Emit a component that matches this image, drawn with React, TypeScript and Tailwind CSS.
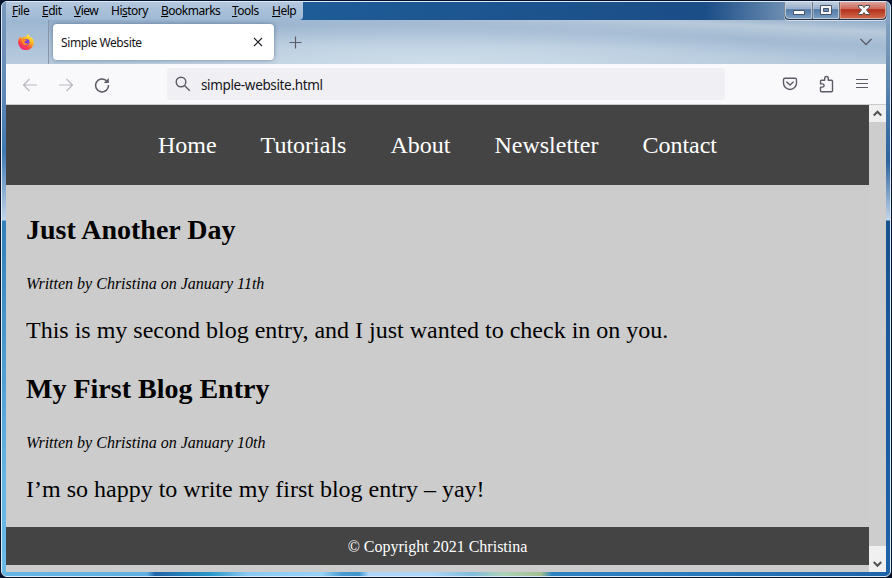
import React from "react";

const menus = ["File", "Edit", "View", "History", "Bookmarks", "Tools", "Help"];
const menuClass = [
  "w-[30px]",
  "w-8",
  "w-[37px]",
  "w-[50px]",
  "w-[71px]",
  "w-10",
  "w-[35px]",
];

function MenuBar() {
  return (
    <div className="flex h-[18px] w-[297px] shrink-0 rounded-br-[4px] bg-linear-to-b from-[#b3c7de] to-[#9fb9d5] pl-1.5 text-[12px] leading-[18px] text-black">
      {menus.map((name, i) => {
        const at = name === "History" ? 2 : 0;
        return (
          <span key={name} className={`${menuClass[i]} shrink-0 whitespace-nowrap tracking-[-0.5px]`}>
            {name.slice(0, at)}
            <span className="underline underline-offset-1">{name[at]}</span>
            {name.slice(at + 1)}
          </span>
        );
      })}
    </div>
  );
}

function WindowButtons() {
  return (
    <svg width="103" height="19" viewBox="0 0 103 19" className="shrink-0">
      <defs>
        <linearGradient id="blueBtn" x2="0" y2="1">
          <stop offset="0" stopColor="#c2d0e0" />
          <stop offset=".42" stopColor="#98b0cb" />
          <stop offset=".48" stopColor="#537ba8" />
          <stop offset="1" stopColor="#7c9fc4" />
        </linearGradient>
        <linearGradient id="redBtn" x2="0" y2="1">
          <stop offset="0" stopColor="#e0a79e" />
          <stop offset=".42" stopColor="#cb6a5b" />
          <stop offset=".48" stopColor="#b32f1c" />
          <stop offset="1" stopColor="#d06b4c" />
        </linearGradient>
      </defs>
      <path d="M0 0v14q0 5 5 5h93q5 0 5-5V0z" fill="#d3deea" />
      <path d="M.5 0v13.500q0 4.500 4.500 4.500h93q4.500 0 4.500-4.500V0z" fill="#253449" />
      <path d="M1.500-.5h26v17H5q-3.500 0-3.500-3.500z" fill="url(#blueBtn)" stroke="#d6e0ec" strokeWidth=".8" />
      <path d="M29-.5h25.500v17H29z" fill="url(#blueBtn)" stroke="#d6e0ec" strokeWidth=".8" />
      <path d="M56-.5h45.500V13q0 3.500-3.500 3.500H56z" fill="url(#redBtn)" stroke="#eac5bc" strokeWidth=".8" />
      <path d="M9.500 8.500h11v4h-11z" fill="#fff" stroke="#48546a" />
      <path d="M36.500 3.500h11v9h-11z" fill="#f6f6f6" stroke="#48546a" />
      <path d="M39.500 6.500h5v3h-5z" fill="#6e90b7" stroke="#48546a" />
      <path d="M74.500 3.500h4l1.500 2 1.500-2h4v1.500L82.500 8l3 3.500v1h-4L80 10.500l-1.500 2h-4v-1l3-3.500-3-3z" fill="#fff" stroke="#48485a" />
    </svg>
  );
}

function Firefox() {
  return (
    <svg width="16" height="16" viewBox="0 0 16 16" className="ml-3">
      <defs>
        <linearGradient id="fox" x1=".8" y1=".1" x2=".2" y2="1">
          <stop offset="0" stopColor="#fff04a" />
          <stop offset=".35" stopColor="#ffae20" />
          <stop offset=".65" stopColor="#ff483d" />
          <stop offset="1" stopColor="#ee178b" />
        </linearGradient>
      </defs>
      <path d="M10.500 0c.3 2 1.700 2.600 2.400 3.800l.2-.8c2 1.700 2.800 3.800 2.800 5.300a7.900 7.700 0 0 1-15.800.2C0 6 1 3.800 2.200 2.500l.3 1.700 1.700-.7C5.500 2.700 7 2.800 8.200 3c.2-1.300 1.200-2.400 2.300-3z" fill="url(#fox)" />
      <circle cx="8.300" cy="8.200" r="3.200" fill="#7542e5" />
      <path d="M3 5.500c1.500-1 3-.8 4 .1l2 .1c-.2 1-1.800 1.300-2.500 2 0 1.800 2.700 2.500 4.300 1-.5 2.800-5.800 3.600-6.600-.3z" fill="#ff8a22" />
      <path d="M9 4.200c3 .4 3.600 3 2.600 5.300 1.600-1 2-3 1.300-5z" fill="#ffc52f" />
    </svg>
  );
}

function TabBar() {
  return (
    <div className="flex h-11 shrink-0 items-center bg-[radial-gradient(ellipse_380px_42px_at_430px_44px,#cfdeea_0%,transparent_100%),linear-gradient(to_bottom_left,#8faac9_0%,#b8c9da_14%,#a3bad3_30%,transparent_50%),linear-gradient(#94aeca,#b2c7dc_65%,#b5c9db)]">
      <div className="flex h-full w-[43px] items-center border-r border-[#8796a8] bg-linear-to-b from-[#9db6d1] to-[#b9cbdf]">
        <Firefox />
      </div>
      <div className="ml-1 flex h-9 w-[221px] items-center justify-between rounded-[4px] bg-white pt-0.5 pr-[11px] pl-2 shadow-[0_0_4px_rgba(50,70,110,0.55)]">
        <span className="text-[12px] tracking-[-0.4px] text-[#15141a]">Simple Website</span>
        <svg width="10" height="10" viewBox="0 0 10 10" className="mb-0.5" stroke="#202027" strokeWidth="1.100"><path d="M1 1l8 8M9 1L1 9" /></svg>
      </div>
      <svg width="13" height="13" viewBox="0 0 13 13" className="ml-[15px]" stroke="#5b5b66" strokeWidth="1.200"><path d="M6.500.5v12M.5 6.500h12" /></svg>
      <svg width="14" height="8" viewBox="0 0 14 8" className="mr-[13px] ml-auto" fill="none" stroke="#5b5b66" strokeWidth="1.300"><path d="M1.500 1L7 6.500 12.500 1" /></svg>
    </div>
  );
}

function Toolbar() {
  return (
    <div className="flex h-[41px] shrink-0 items-center border-b border-[#cccccf] bg-[#f9f9fb] pr-4 pl-4">
      <svg width="90" height="18" viewBox="0 0 90 18" className="mt-px" fill="none" strokeWidth="1.200">
        <path d="M15 9H1.500M7.500 3l-6 6 6 6M37 9h13.500M44.500 3l6 6-6 6" stroke="#b7b7bd" />
        <path d="M84.500 4.700A6.500 6.500 0 1 0 86.500 9" stroke="#5b5b66" strokeWidth="1.500" />
        <path d="M86.800 2v5h-5z" fill="#5b5b66" />
      </svg>
      <div className="ml-[55px] flex h-8 w-[558px] items-center rounded-[4px] bg-[#f0f0f4]">
        <svg width="16" height="16" viewBox="0 0 16 16" className="ml-2 shrink-0" fill="none" stroke="#5b5b66" strokeWidth="1.400"><circle cx="6" cy="6" r="4.800" /><path d="M9.500 9.500l5.300 5.300" /></svg>
        <span className="mt-0.5 ml-2.5 text-[13.500px] tracking-[-0.35px] text-[#15141a]">simple-website.html</span>
      </div>
      <svg width="88" height="18" viewBox="0 0 88 18" className="ml-auto" fill="none" stroke="#5b5b66" strokeWidth="1.400" strokeLinecap="round" strokeLinejoin="round">
        <path d="M3 3.200h10q1.500 0 1.500 1.500V8a6.500 6.500 0 0 1-13 0V4.700Q1.500 3.200 3 3.200zM4.800 7L8 10l3.200-3" />
        <path d="M39.500 16.700h10q1 0 1-1V6.200q0-1-1-1h-3.200V3.200q0-1.700-1.800-1.700T42.700 3.200v2h-3.200q-1 0-1 1v2.700h1.800q1.800 0 1.800 1.600t-1.800 1.600h-1.800v3.600q0 1 1 1z" />
        <path d="M74.500 4.500h11M74.500 8.500h11M74.500 12.500h11" strokeWidth="1.200" />
      </svg>
    </div>
  );
}

const posts = [
  { title: "Just Another Day", by: "Written by Christina on January 11th", text: "This is my second blog entry, and I just wanted to check in on you." },
  { title: "My First Blog Entry", by: "Written by Christina on January 10th", text: "I’m so happy to write my first blog entry – yay!" },
];

function Page() {
  return (
    <div className="flex w-[863px] flex-col bg-[#ccc] font-['Liberation_Serif','Times_New_Roman',serif]">
      <nav className="flex h-20 shrink-0 items-center justify-center gap-11 bg-[#444] text-[24px] text-white">
        <a>Home</a><a>Tutorials</a><a>About</a><a>Newsletter</a><a>Contact</a>
      </nav>
      <main className="flex h-[342px] shrink-0 flex-col pt-[25px] pl-5 text-black">
        {posts.map((p) => (
          <article key={p.title} className="h-[159px] whitespace-nowrap">
            <h2 className="h-10 text-[28px] leading-10 font-bold">{p.title}</h2>
            <p className="mt-[22px] h-6 text-[16px] leading-6 italic">{p.by}</p>
            <p className="mt-[18px] h-8 text-[24px] leading-8">{p.text}</p>
          </article>
        ))}
      </main>
      <footer className="flex h-[38px] shrink-0 items-center justify-center bg-[#444] pt-0.5 text-[16px] text-white">© Copyright 2021 Christina</footer>
    </div>
  );
}

function Arrow({ down = false }: { down?: boolean }) {
  return (
    <svg width="9" height="7" viewBox="0 0 9 7" fill="none" stroke="#555" strokeWidth="2.200">
      <path d={down ? "M.7 1L4.500 4.800 8.300 1" : "M.7 5.500L4.500 1.700 8.300 5.500"} />
    </svg>
  );
}

export default function App() {
  return (
    <div className="h-[578px] w-[892px] bg-[#07122c] p-px font-['Noto_Sans','Open_Sans',sans-serif]">
      <div className="flex h-full flex-col overflow-hidden rounded-[6px] border border-[#dceaf5] bg-[#8da9c8]">
        <div className="flex min-h-0 flex-1">
          <div className="w-1 bg-[linear-gradient(#7898bc_0,#6289b5_90px,#3e79b2_150px,#c2d5e8_218px,#327fb9_219px,#65b6e4_480px,#6bbae8)]" />
          <div className="flex w-[880px] flex-col">
            <div className="flex h-[18px] shrink-0 justify-between bg-[linear-gradient(90deg,#1e5c97_300px,#1b4d87_700px,#7897b8_790px,#88a4c1)]">
              <MenuBar />
              <div className="relative left-px z-10 h-[18px]"><WindowButtons /></div>
            </div>
            <TabBar />
            <Toolbar />
            <div className="flex min-h-0 flex-1 bg-[#ccc]">
              <Page />
              <div className="flex w-[17px] flex-col justify-between bg-[#cdcdcd]">
                <div className="flex h-[17px] items-center justify-center bg-[#f0f0f0]"><Arrow /></div>
                <div className="flex h-[26px] items-end justify-center bg-[#f0f0f0] pb-1"><Arrow down /></div>
              </div>
            </div>
          </div>
          <div className="w-1 bg-[linear-gradient(#8ca7c4_0,#6d90b5_60px,#386da4_130px,#2e649e_160px,#c2d5e8_218px,#175291_219px,#1d63a9_100%)]" />
        </div>
        <div className="h-1 shrink-0 bg-[linear-gradient(90deg,#65b6e4_0,#5db0e1_145px,#2065a9_153px,#2797ca_208px,#8bcaf3_245px,#98d3f8_320px,#489bd2_340px,#3f96cf_357px,#b0d7fb_367px,#acd5f6_430px,#80bddc_470px,#acd3ba_500px,#a5be91_539px,#2c83c2_550px,#287bc0_680px,#1d63a9_100%)]" />
      </div>
    </div>
  );
}
